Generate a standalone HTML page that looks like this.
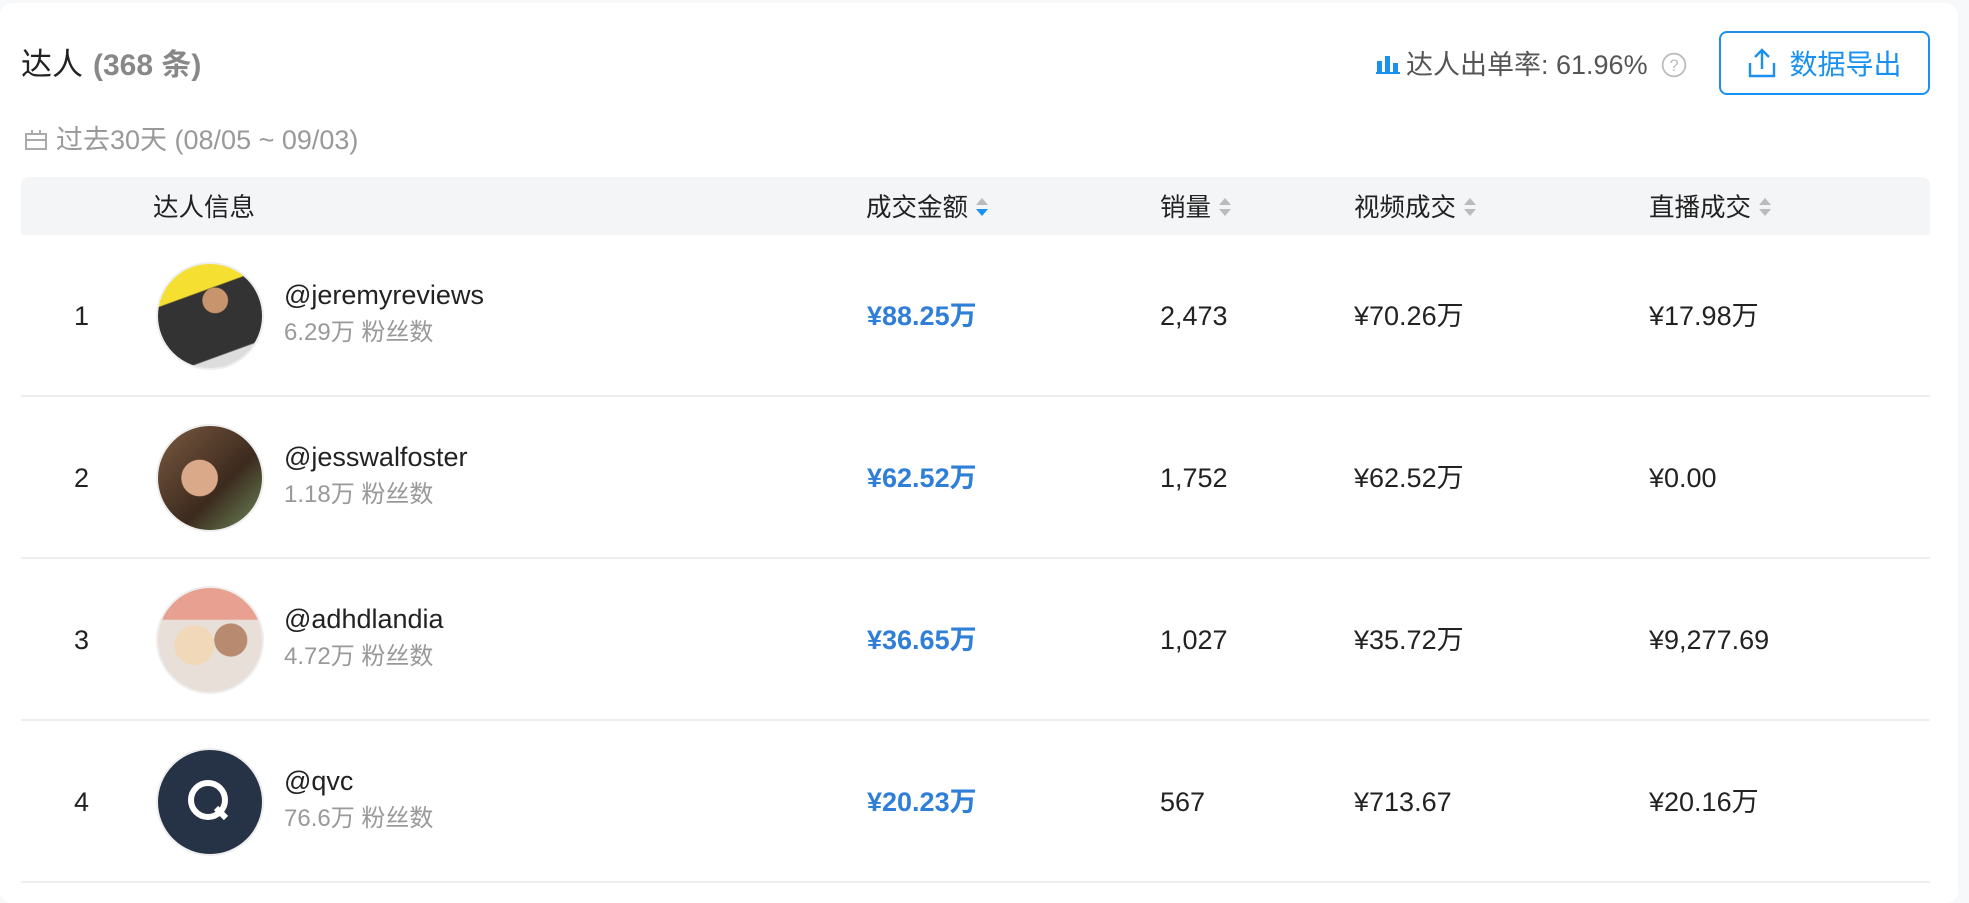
<!DOCTYPE html>
<html><head><meta charset="utf-8"><style>
*{margin:0;padding:0;box-sizing:border-box}
body{width:1969px;height:891px;background:#f7f8fa;font-family:"Liberation Sans","Noto Sans CJK SC",sans-serif;color:#222;overflow:hidden;position:relative}
.card{position:absolute;left:0;top:3px;width:1958px;height:900px;background:#fff;border-radius:12px}
.a{position:absolute white-space:nowrap}
.a{position:absolute;white-space:nowrap}
.title{left:21px;top:45px;font-size:31px;line-height:40px;color:#222}
.title span{color:#888;margin-left:10px;font-weight:bold;font-size:30px}
.date{left:24px;top:123px;font-size:27px;line-height:34px;color:#999}
.hdr{position:absolute;left:21px;top:177px;width:1909px;height:58px;background:#f4f5f7;border-radius:8px 8px 0 0}
.h{top:191px;font-size:25.5px;line-height:34px;color:#222}
.sort{display:inline-block;vertical-align:middle;margin-left:8px;width:12px;height:22px;position:relative;top:-2px}
.sort:before{content:"";position:absolute;left:0;top:2px;border:6px solid transparent;border-bottom:7px solid #bbb;border-top:0}
.sort:after{content:"";position:absolute;left:0;top:13px;border:6px solid transparent;border-top:7px solid #bbb;border-bottom:0}
.sort.on:after{border-top-color:#1a90f0}
.row{position:absolute;left:21px;width:1909px;height:162px;border-bottom:2px solid #eceef0}
.c{position:absolute;font-size:27px;line-height:34px;top:64px;white-space:nowrap}
.rk{left:53px}
.av{left:135px;top:27px;width:108px;height:108px;border-radius:50%;border:2px solid #eee;overflow:hidden}
.nm{left:263px;top:43px;font-size:27px}
.fn{left:263px;top:81px;font-size:24px;color:#999}
.amt{left:846px;color:#2f7fd8;font-weight:bold;font-size:27px}
.s{left:1139px}.v{left:1333px}.l{left:1628px}
.btn{left:1719px;top:31px;width:211px;height:64px;border:2px solid #1a90f0;border-radius:8px;color:#1a90f0;font-size:28px;display:flex;align-items:center;justify-content:center;gap:12px}
</style></head><body>
<div class="card"></div>
<div class="a title">达人<span>(368 条)</span></div>
<div class="a date"><svg width="24" height="22" viewBox="0 0 24 22" style="vertical-align:-2px;margin-right:8px"><rect x="2" y="5" width="20" height="15" fill="none" stroke="#aaa" stroke-width="2"/><line x1="2" y1="11" x2="22" y2="11" stroke="#aaa" stroke-width="2"/><line x1="8" y1="1" x2="8" y2="6" stroke="#aaa" stroke-width="2"/><line x1="16" y1="1" x2="16" y2="6" stroke="#aaa" stroke-width="2"/></svg>过去30天 (08/05 ~ 09/03)</div>
<div class="a" style="left:1376px;top:48px;font-size:27px;line-height:34px;color:#555"><svg width="24" height="22" viewBox="0 0 24 22" style="vertical-align:-1px;margin-right:6px"><rect x="1" y="8" width="5" height="12" fill="#1a90f0"/><rect x="9" y="3" width="5" height="17" fill="#1a90f0"/><rect x="17" y="10" width="5" height="10" fill="#1a90f0"/><rect x="0" y="19" width="24" height="2" fill="#1a90f0"/></svg>达人出单率: 61.96% <svg width="26" height="26" viewBox="0 0 24 24" style="vertical-align:-4px;margin-left:6px"><circle cx="12" cy="12" r="10.5" fill="none" stroke="#bbb" stroke-width="1.6"/><text x="12" y="17.5" text-anchor="middle" font-size="15" fill="#bbb" font-family="Liberation Sans">?</text></svg></div>
<div class="a btn"><svg width="30" height="32" viewBox="0 0 30 32"><path d="M15 22V3M8 10l7-7 7 7M3 16v13h24V16" fill="none" stroke="#1a90f0" stroke-width="2.4"/></svg>数据导出</div>
<div class="hdr"></div>
<div class="a h" style="left:153px">达人信息</div>
<div class="a h" style="left:866px">成交金额<i class="sort on"></i></div>
<div class="a h" style="left:1160px">销量<i class="sort"></i></div>
<div class="a h" style="left:1354px">视频成交<i class="sort"></i></div>
<div class="a h" style="left:1649px">直播成交<i class="sort"></i></div>

<div class="row" style="top:235px"><div class="c rk">1</div>
<div class="c av" style="background:radial-gradient(circle at 55% 35%,#c8946e 0 14%,transparent 15%),linear-gradient(160deg,#f5df30 0 30%,#333 31% 80%,#ddd 81%)"></div>
<div class="c nm">@jeremyreviews</div><div class="c fn">6.29万 粉丝数</div>
<div class="c amt">¥88.25万</div><div class="c s">2,473</div><div class="c v">¥70.26万</div><div class="c l">¥17.98万</div></div>

<div class="row" style="top:397px"><div class="c rk">2</div>
<div class="c av" style="background:radial-gradient(circle at 40% 50%,#d9a98a 0 22%,transparent 23%),linear-gradient(135deg,#7a5a40,#3c2a1e 60%,#6b8a5a)"></div>
<div class="c nm">@jesswalfoster</div><div class="c fn">1.18万 粉丝数</div>
<div class="c amt">¥62.52万</div><div class="c s">1,752</div><div class="c v">¥62.52万</div><div class="c l">¥0.00</div></div>

<div class="row" style="top:559px"><div class="c rk">3</div>
<div class="c av" style="background:radial-gradient(circle at 35% 55%,#f0d8b8 0 22%,transparent 23%),radial-gradient(circle at 70% 50%,#b88a70 0 18%,transparent 19%),linear-gradient(180deg,#e8a090 0 30%,#e8e0d8 31%)"></div>
<div class="c nm">@adhdlandia</div><div class="c fn">4.72万 粉丝数</div>
<div class="c amt">¥36.65万</div><div class="c s">1,027</div><div class="c v">¥35.72万</div><div class="c l">¥9,277.69</div></div>

<div class="row" style="top:721px"><div class="c rk">4</div>
<div class="c av" style="background:#263346;display:flex;align-items:center;justify-content:center"><svg width="60" height="60" viewBox="0 0 60 60"><circle cx="28" cy="28" r="17" fill="none" stroke="#fff" stroke-width="6"/><path d="M36 36l10 10" stroke="#fff" stroke-width="6"/></svg></div>
<div class="c nm">@qvc</div><div class="c fn">76.6万 粉丝数</div>
<div class="c amt">¥20.23万</div><div class="c s">567</div><div class="c v">¥713.67</div><div class="c l">¥20.16万</div></div>
</body></html>
